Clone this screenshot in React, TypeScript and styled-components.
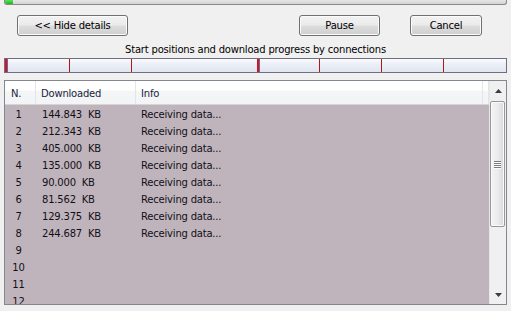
import styled, { createGlobalStyle } from 'styled-components'

const GlobalStyle = createGlobalStyle`
  html, body {
    margin: 0;
    padding: 0;
    background: #f0f0f0;
  }
  body {
    font-family: "DejaVu Sans", "Liberation Sans", sans-serif;
    font-size: 10px;
    letter-spacing: -0.2px;
    color: #000;
  }
`

const rows = [
  '144.843', '212.343', '405.000', '135.000', '90.000', '81.562', '129.375', '244.687',
]

// start markers on the connection bar: [x, kind]
const markers: [number, 'main' | 'thin'][] = [
  [0, 'main'], [64, 'thin'], [126, 'thin'], [252, 'main'], [314, 'thin'], [376, 'thin'], [438, 'thin'],
]

const App = () => {
  return (
    <Window>
      <GlobalStyle />
      <TopBar>
        <TopFill />
      </TopBar>

      <ButtonRow>
        <Button w={111}>&lt;&lt; Hide details</Button>
        <Spacer />
        <Button w={81}>Pause</Button>
        <Button w={72}>Cancel</Button>
      </ButtonRow>

      <Caption>Start positions and download progress by connections</Caption>

      <ConnBar>
        {markers.map(([x, kind]) => (
          <Marker key={x} kind={kind} style={{ left: x }} />
        ))}
      </ConnBar>

      <List>
        <Table>
          <Header>
            <HeadCell w={31} pl={6}>N.</HeadCell>
            <HeadCell w={100} pl={5}>Downloaded</HeadCell>
            <HeadCell w={347} pl={5}>Info</HeadCell>
            <HeadCell w={6} pl={0} />
          </Header>
          <Body>
            {Array.from({ length: 12 }, (_, i) => (
              <Row key={i}>
                <NumCell>{i + 1}</NumCell>
                <SizeCell>{rows[i] ? `${rows[i]}  KB` : ''}</SizeCell>
                <InfoCell>{rows[i] ? 'Receiving data...' : ''}</InfoCell>
              </Row>
            ))}
          </Body>
        </Table>
        <ScrollBar>
          <Arrow>
            <svg width="7" height="4" viewBox="0 0 7 4"><path d="M3.5 0 L7 4 L0 4 Z" fill="#3c3c3c" /></svg>
          </Arrow>
          <Track>
            <Thumb>
              <Grip>
                <span /><span /><span /><span />
              </Grip>
            </Thumb>
          </Track>
          <Arrow>
            <svg width="7" height="4" viewBox="0 0 7 4"><path d="M0 0 L7 0 L3.5 4 Z" fill="#3c3c3c" /></svg>
          </Arrow>
        </ScrollBar>
      </List>
    </Window>
  )
}

export default App

const Window = styled.div`
  width: 511px;
  height: 311px;
  overflow: hidden;
  display: flex;
  flex-direction: column;
`
const TopBar = styled.div`
  margin: 0 4px;
  height: 4px;
  border: 1px solid #8a8a8a;
  border-top: none;
  border-radius: 0 0 3px 3px;
  background: linear-gradient(#e6e6e6, #d4d4d4);
  overflow: hidden;
`
const TopFill = styled.div`
  width: 8px;
  height: 100%;
  background: linear-gradient(#5ee05e, #1db81d);
`
const ButtonRow = styled.div`
  display: flex;
  margin-top: 10px;
  padding: 0 29px 0 17px;
  gap: 30px;
  height: 21px;
`
const Spacer = styled.div`
  flex: 1;
`
const Button = styled.button<{ w: number }>`
  width: ${({ w }) => w}px;
  height: 21px;
  padding: 0;
  border: 1px solid #707070;
  border-radius: 3px;
  background: linear-gradient(#f2f2f2 0%, #ebebeb 48%, #dddddd 52%, #cfcfcf 100%);
  box-shadow: inset 0 0 0 1px #fbfbfb;
  font-family: "DejaVu Sans", sans-serif;
  font-size: 10px;
  letter-spacing: -0.2px;
  color: #000;
  line-height: 19px;
`
const Caption = styled.div`
  margin-top: 6px;
  height: 15px;
  line-height: 15px;
  text-align: center;
`
const ConnBar = styled.div`
  position: relative;
  margin: 1px 4px 0;
  height: 13px;
  border: 1px solid #6e6e80;
  background: linear-gradient(#fbfcfe 0%, #eef1f8 30%, #e0e5f1 100%);
`
const Marker = styled.div<{ kind: 'main' | 'thin' }>`
  position: absolute;
  top: 0;
  bottom: 0;
  width: ${({ kind }) => (kind === 'main' ? 2 : 1)}px;
  background: ${({ kind }) => (kind === 'main' ? '#e01010' : '#b01818')};
  box-shadow: ${({ kind }) => (kind === 'main' ? '1px 0 0 #5a6ab8' : 'none')};
`
const List = styled.div`
  margin: 7px 4px 0;
  height: 223px;
  border: 1px solid #828790;
  display: flex;
  background: #c0b4bc;
`
const Table = styled.div`
  flex: 1;
  display: flex;
  flex-direction: column;
  overflow: hidden;
`
const Header = styled.div`
  display: flex;
  height: 23px;
  background: linear-gradient(#ffffff 0%, #ffffff 40%, #f4f5f7 45%, #f3f4f6 100%);
  border-bottom: 1px solid #d5d5d5;
  color: #1a2540;
`
const HeadCell = styled.div<{ w: number; pl: number }>`
  width: ${({ w }) => w}px;
  padding-left: ${({ pl }) => pl}px;
  box-sizing: border-box;
  border-right: 1px solid #e3e5e9;
  line-height: 25px;
`
const Body = styled.div`
  padding-top: 1px;
`
const Row = styled.div`
  display: flex;
  height: 17px;
  line-height: 17px;
  color: #101018;
  white-space: pre;
`
const NumCell = styled.div`
  width: 27px;
  text-align: center;
`
const SizeCell = styled.div`
  width: 99px;
  padding-left: 10px;
  box-sizing: border-box;
`
const InfoCell = styled.div`
  padding-left: 10px;
`
const ScrollBar = styled.div`
  width: 17px;
  display: flex;
  flex-direction: column;
  background: #f0f0f0;
  border-left: 1px solid #e8e8e8;
  box-sizing: border-box;
`
const Arrow = styled.div`
  height: 19px;
  display: flex;
  align-items: center;
  justify-content: center;
`
const Track = styled.div`
  flex: 1;
  padding-top: 1px;
`
const Thumb = styled.div`
  margin-left: 0;
  width: 15px;
  height: 126px;
  box-sizing: border-box;
  border: 1px solid #979797;
  border-radius: 2px;
  background: linear-gradient(90deg, #f4f4f4 0%, #ececec 50%, #d8d8d8 100%);
  box-shadow: inset 0 0 0 1px #fafafa;
  display: flex;
  align-items: center;
  justify-content: center;
`
const Grip = styled.div`
  display: flex;
  flex-direction: column;
  gap: 1px;
  span {
    display: block;
    width: 7px;
    height: 1px;
    background: #7a7a7a;
    box-shadow: 0 1px 0 #fdfdfd;
  }
`
